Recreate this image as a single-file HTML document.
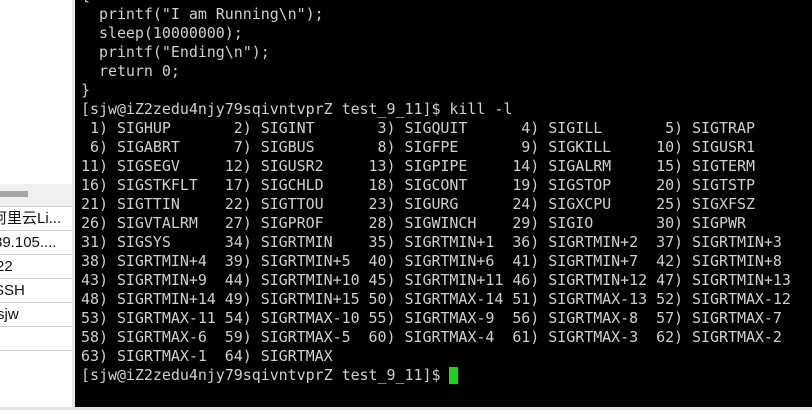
<!DOCTYPE html>
<html><head><style>
body{margin:0;width:812px;height:410px;overflow:hidden;background:#fff;position:relative;font-family:"Liberation Sans","Noto Sans CJK SC",sans-serif}
#left{position:absolute;left:0;top:0;width:72px;height:410px;background:#fff;overflow:hidden}
#sep{position:absolute;left:72px;top:0;width:3px;height:410px;background:#e6e6e6}
.band{position:absolute;left:0;top:184px;width:72px;height:22px;background:#f0f0f0}
.sb{position:absolute;left:0;top:191px;width:28px;height:6px;background:#a6a6a6}
.row{position:absolute;left:0;width:72px;height:24px;border-top:1px solid #cfcfcf;font-size:15px;line-height:23px;color:#111;white-space:nowrap}
#term{position:absolute;left:75px;top:0;width:737px;height:407px;background:#000;overflow:hidden}
pre{position:absolute;left:6px;top:-14px;margin:0;font-family:"DejaVu Sans Mono","Liberation Mono",monospace;font-size:15px;letter-spacing:-0.045px;line-height:19px;color:#cfcfcf}
.cur{position:absolute;left:374px;top:367px;width:9px;height:17px;background:#19d419}
#bot{position:absolute;left:0;top:407px;width:812px;height:3px;background:#e6e6e6}
</style></head><body>
<div id="left">
<div class="band"></div><div class="sb"></div>
<div class="row" style="top:206px"><span style="margin-left:-8px">阿里云Li...</span></div>
<div class="row" style="top:230px"><span style="margin-left:-6px">39.105....</span></div>
<div class="row" style="top:254px"><span style="margin-left:-4px">22</span></div>
<div class="row" style="top:278px"><span style="margin-left:-6px">SSH</span></div>
<div class="row" style="top:302px"><span style="margin-left:-3px">sjw</span></div>
<div class="row" style="top:326px"></div>
<div class="row" style="top:350px;height:0"></div>
</div>
<div id="sep"></div>
<div id="term"><pre>{
  printf("I am Running\n");
  sleep(10000000);
  printf("Ending\n");
  return 0;
}
[sjw@iZ2zedu4njy79sqivntvprZ test_9_11]$ kill -l
 1) SIGHUP       2) SIGINT       3) SIGQUIT      4) SIGILL       5) SIGTRAP
 6) SIGABRT      7) SIGBUS       8) SIGFPE       9) SIGKILL     10) SIGUSR1
11) SIGSEGV     12) SIGUSR2     13) SIGPIPE     14) SIGALRM     15) SIGTERM
16) SIGSTKFLT   17) SIGCHLD     18) SIGCONT     19) SIGSTOP     20) SIGTSTP
21) SIGTTIN     22) SIGTTOU     23) SIGURG      24) SIGXCPU     25) SIGXFSZ
26) SIGVTALRM   27) SIGPROF     28) SIGWINCH    29) SIGIO       30) SIGPWR
31) SIGSYS      34) SIGRTMIN    35) SIGRTMIN+1  36) SIGRTMIN+2  37) SIGRTMIN+3
38) SIGRTMIN+4  39) SIGRTMIN+5  40) SIGRTMIN+6  41) SIGRTMIN+7  42) SIGRTMIN+8
43) SIGRTMIN+9  44) SIGRTMIN+10 45) SIGRTMIN+11 46) SIGRTMIN+12 47) SIGRTMIN+13
48) SIGRTMIN+14 49) SIGRTMIN+15 50) SIGRTMAX-14 51) SIGRTMAX-13 52) SIGRTMAX-12
53) SIGRTMAX-11 54) SIGRTMAX-10 55) SIGRTMAX-9  56) SIGRTMAX-8  57) SIGRTMAX-7
58) SIGRTMAX-6  59) SIGRTMAX-5  60) SIGRTMAX-4  61) SIGRTMAX-3  62) SIGRTMAX-2
63) SIGRTMAX-1  64) SIGRTMAX
[sjw@iZ2zedu4njy79sqivntvprZ test_9_11]$ </pre><div class="cur"></div></div>
<div id="bot"></div>
</body></html>
